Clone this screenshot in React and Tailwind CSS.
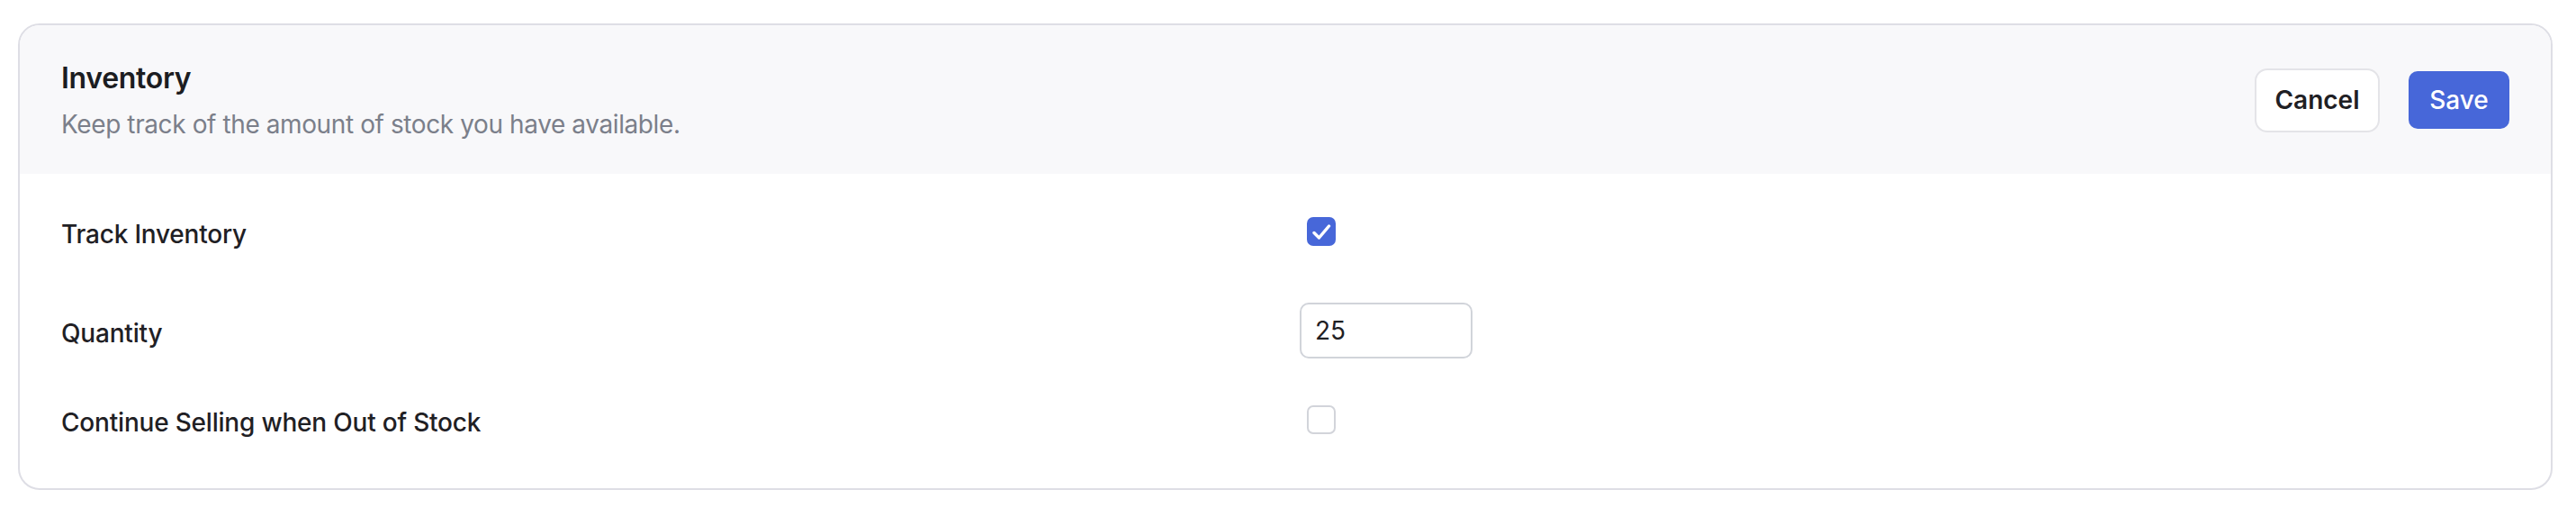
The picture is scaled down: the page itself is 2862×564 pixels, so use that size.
import { useState } from 'react'

function Checkbox({ checked, onChange }) {
  return (
    <button
      type="button"
      onClick={() => onChange(!checked)}
      className={
        'ml-[8px] flex h-[32px] w-[32px] items-center justify-center rounded-[7px] ' +
        (checked ? 'bg-[#4767d9]' : 'border-2 border-[#d2d4da] bg-white')
      }
    >
      {checked && (
        <svg viewBox="0 0 32 32" className="h-[32px] w-[32px]" fill="none">
          <path d="M8 17.5 L13.5 23 L24.5 10" stroke="white" strokeWidth="3.4" strokeLinecap="round" strokeLinejoin="round" />
        </svg>
      )}
    </button>
  )
}

function Row({ label, className = '', children }) {
  return (
    <div className={'grid grid-cols-2 items-center gap-8 ' + className}>
      <span className="relative top-[3px] text-[28px] leading-[42px] font-medium tracking-[-0.2px] text-[#1f2024]">{label}</span>
      <div className="flex items-center">{children}</div>
    </div>
  )
}

export default function App() {
  const [track, setTrack] = useState(true)
  const [qty, setQty] = useState('25')
  const [sell, setSell] = useState(false)

  return (
    <div className="min-h-[564px] bg-white pt-[26px] pl-[20px] pr-[26px] font-['Inter',sans-serif]">
      <div className="overflow-hidden rounded-[24px] border-2 border-[#dedee5] bg-white">
        {/* header */}
        <div className="flex items-center justify-between bg-[#f8f8fa] px-[46px] pt-[35px] pb-[34px]">
          <div>
            <h1 className="text-[32px] leading-[48px] font-semibold tracking-[-0.3px] text-[#1c1d21]">Inventory</h1>
            <p className="mt-1.5 text-[28px] leading-[42px] tracking-[-0.4px] text-[#7b7f8a]">Keep track of the amount of stock you have available.</p>
          </div>
          <div className="flex items-center gap-8">
            <button className="h-[71px] w-[139px] rounded-[14px] border-2 border-[#e4e4e8] bg-white text-[28px] font-semibold text-[#1f2024]">
              Cancel
            </button>
            <button className="h-[64px] w-[112px] rounded-[10px] bg-[#4767d9] text-[28px] font-medium text-white">
              Save
            </button>
          </div>
        </div>

        {/* body */}
        <div className="px-[46px] pt-[43px] pb-[55px]">
          <Row label="Track Inventory">
            <Checkbox checked={track} onChange={setTrack} />
          </Row>
          <Row label="Quantity" className="mt-[58px]">
            <input
              value={qty}
              onChange={(e) => setQty(e.target.value)}
              className="h-[62px] w-[192px] rounded-[10px] border-2 border-[#d1d4da] bg-white px-[15px] text-[28px] text-[#1f2024] outline-none"
            />
          </Row>
          <Row label="Continue Selling when Out of Stock" className="mt-[47px]">
            <Checkbox checked={sell} onChange={setSell} />
          </Row>
        </div>
      </div>
    </div>
  )
}
